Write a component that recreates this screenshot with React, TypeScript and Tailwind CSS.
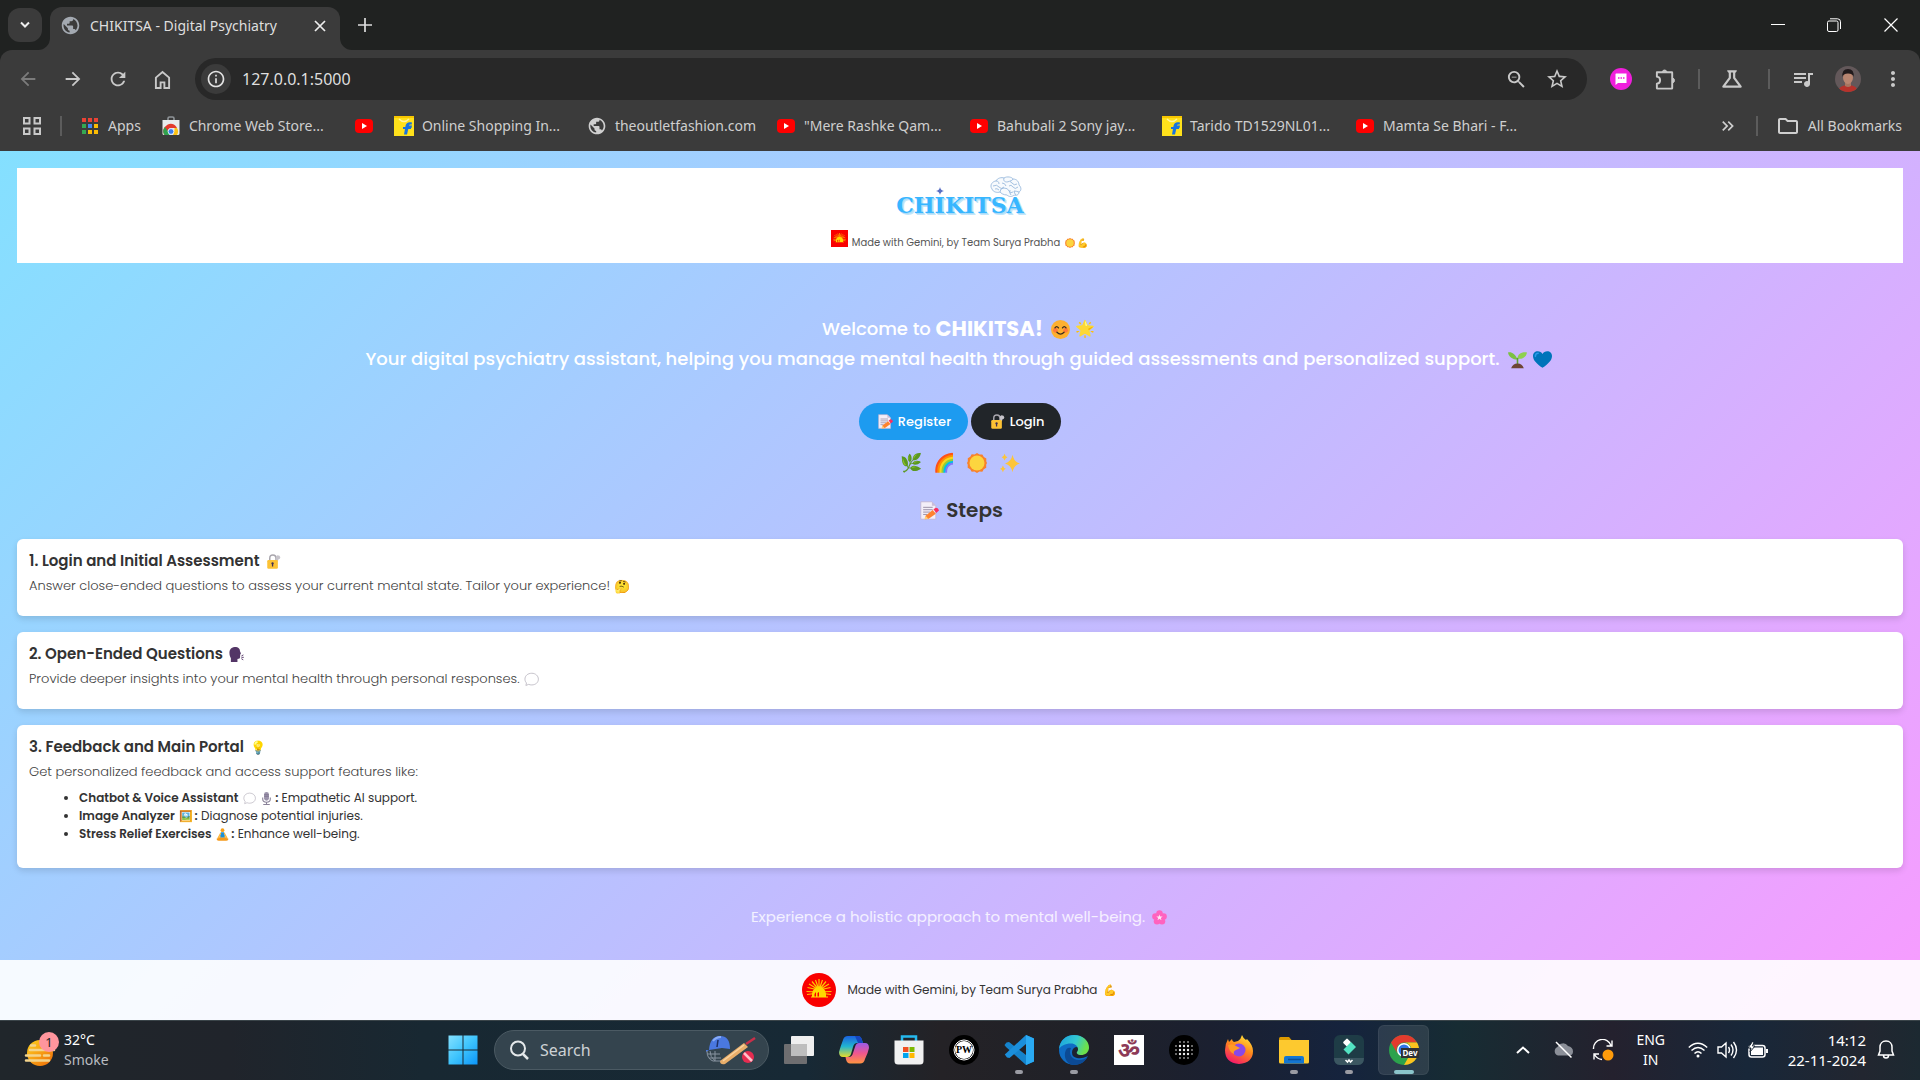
import type { ReactNode } from "react";
import {
  MdArrowBack,
  MdArrowForward,
  MdRefresh,
  MdInfoOutline,
  MdZoomOut,
  MdStarOutline,
  MdOutlineScience,
  MdQueueMusic,
  MdMoreVert,
  MdPublic,
  MdOutlineFolder,
  MdKeyboardDoubleArrowRight,
} from "react-icons/md";

/* ---------- emoji ---------- */

const drawn: Record<string, ReactNode> = {
  "😊": (
    <>
      <circle cx="12" cy="12" r="12" fill="#fdb02f" />
      <circle cx="5.5" cy="13" r="3" fill="#ff7a3c" />
      <circle cx="18.5" cy="13" r="3" fill="#ff7a3c" />
      <path d="M5 10q2-3.500 4.500 0M14.500 10q2.200-3.500 4.500 0M7.500 15.500q4.500 4.500 9 0" fill="none" stroke="#3a2a20" strokeWidth="1.6" strokeLinecap="round" />
    </>
  ),
  "🌱": (
    <>
      <path d="M12 12C9 4 4 2 0 3c1 6 6 9 12 9z" fill="#7bc143" />
      <path d="M12 11c0-6 5-9 12-8-1 6-6 9-12 8z" fill="#8fd14f" />
      <path d="M12 10v9" stroke="#5c9e31" strokeWidth="2" />
      <path d="M4 23q2-6 8-6t8 6z" fill="#6d4534" />
    </>
  ),
  "📝": (
    <>
      <path d="M1 1h14l5 5v17H1z" fill="#f3eef8" stroke="#bfb2cf" strokeWidth="1" />
      <path d="M15 1l5 5h-5z" fill="#c9bcd8" />
      <path d="M4 8h12M4 11h12M4 14h9M4 17h5" stroke="#998ea4" strokeWidth="1.2" />
      <path d="M7 18.500l9-7 4 4.500-9 6.500-4.500.5z" fill="#ff822d" />
      <path d="M17 10.500l3-2q3 0 4 3.500l-3.500 3z" fill="#f92f60" />
      <path d="M7 18.500L5.500 23l5-.5z" fill="#ffce7c" />
    </>
  ),
  "🔐": (
    <>
      <path d="M6 11V7q0-5.500 5-5.500t5 5.500v4" fill="none" stroke="#a9a6ad" strokeWidth="2.4" />
      <path d="M16 7q-1-4 2.500-5 4 0 4.500 3.500-1 3-3 3l-1 3-2.500-1z" fill="#c7c4cb" />
      <rect x="2" y="9.500" width="17" height="14" rx="2" fill="#fcc234" />
      <path d="M10.500 13a2 2 0 011 3.700V20h-2v-3.300a2 2 0 011-3.700z" fill="#3f2f55" />
    </>
  ),
  "☀️": (
    <>
      <path d="M12 0l3 1.700 3.400.1 1.800 3 3 1.700-.1 3.500L24 12l-1 2.200.1 3.500-3 1.700-1.700 3-3.500-.1-2.900 1.700-3-1.700-3.400.1-1.800-3-3-1.700.1-3.500L0 12l1-2.200L.9 6.300l3-1.700 1.700-3 3.500.1z" fill="#f8822b" />
      <circle cx="12" cy="12" r="9" fill="#fcd53f" />
    </>
  ),
  "💙": (
    <>
      <path d="M12 22.500C5 17.500 0 13 0 7.500 0 4 2.600 1.500 6 1.500c2.600 0 4.800 1.300 6 3.500 1.200-2.200 3.400-3.500 6-3.500 3.400 0 6 2.500 6 6 0 5.500-5 10-12 15z" fill="#0074ba" />
      <path d="M3 8c0-2.500 1.500-4 3.500-4" stroke="#2b9bea" strokeWidth="2" fill="none" strokeLinecap="round" />
    </>
  ),
  "🗣️": (
    <>
      <path d="M3 24V18C-.5 12-1 1 9 0c6-.6 8.500 3 8.500 6 0 1.500 1.500 3 1.500 4.500 0 1-1.200 1-1.200 2 0 5.500.2 6.500-4.300 6.500V24z" fill="#533566" />
      <path d="M20.500 14l2-1M20.500 16.500h2.500M20.300 19l2 1.200" stroke="#533566" strokeWidth="1.5" strokeLinecap="round" />
    </>
  ),
  "🗨️": <path d="M12.500 2C6 2 1.500 6 1.500 11.500c0 2.500 1 4.500 2.500 6L3 21.500l4.500-1.700c1.500.6 3.200.9 5 .9 6 0 10.500-4 10.500-9.200S18.500 2 12.500 2z" fill="#fff" stroke="#b9b5bf" strokeWidth="1.3" />,
  "🎙️": (
    <>
      <rect x="7.5" y="0" width="9" height="16" rx="4.5" fill="#9b93ab" />
      <path d="M7.500 5h9M7.500 8h9" stroke="#6d6580" />
      <path d="M5 10v3c0 8 14 8 14 0v-3M12 19v3M6 23h12" stroke="#8a8299" strokeWidth="2" fill="none" />
    </>
  ),
  "🧘": (
    <>
      <circle cx="12" cy="4" r="3.5" fill="#f9a11b" />
      <path d="M9 8h6l2 10H7z" fill="#1b8fd6" />
      <path d="M9 9l-5 9 5-2M15 9l5 9-5-2" stroke="#fdb53a" strokeWidth="2" fill="none" />
      <path d="M1 20q11-5 22 0 0 4-5 3.500H6Q1 24 1 20z" fill="#f59a1c" />
    </>
  ),
  "🌸": (
    <>
      <g fill="#ff63bf">
        <circle cx="12" cy="5.5" r="5.2" />
        <circle cx="18.5" cy="10.2" r="5.2" />
        <circle cx="16" cy="18" r="5.2" />
        <circle cx="8" cy="18" r="5.2" />
        <circle cx="5.5" cy="10.2" r="5.2" />
        <circle cx="12" cy="12" r="6" />
      </g>
      <path d="M12 7l1.200 3.500H17l-3 2.200 1.200 3.600-3.200-2.200-3.200 2.200L10 12.700l-3-2.200h3.800z" fill="#ffe9f6" />
    </>
  ),
  "✨": (
    <g fill="#fcc53a">
      <path d="M15 2q1.500 8.500 9 10.500-7.500 2-9 10.500-1.500-8.500-9-10.500Q13.500 10.500 15 2z" />
      <path d="M5.500 1q.6 3 3.500 4-2.900 1-3.500 4-.6-3-3.500-4 2.900-1 3.500-4zM3.500 15q.6 3 3.500 4-2.900 1-3.500 4-.6-3-3.500-4 2.900-1 3.500-4z" />
    </g>
  ),
};

const sizes = {
  xs: { box: "w-[13px]", art: "size-[10px]", text: "text-[9px]" },
  sm: { box: "w-[17px]", art: "size-[13px]", text: "text-[11px]" },
  md: { box: "w-5", art: "size-[15px]", text: "text-[13px]" },
  lg: { box: "w-[25px]", art: "size-[19px]", text: "text-[16px]" },
  xl: { box: "w-[33px]", art: "size-5", text: "text-[18px]" },
};

function Emoji({ e, s }: { e: string; s: keyof typeof sizes }) {
  const z = sizes[s];
  return (
    <span className={`inline-flex h-[1em] shrink-0 items-center justify-center align-middle leading-none ${z.box}`}>
      {drawn[e] ? (
        <svg role="img" aria-label={e} viewBox="0 0 24 24" className={`shrink-0 ${z.art}`}>{drawn[e]}</svg>
      ) : (
        <span className={z.text}>{e}</span>
      )}
    </span>
  );
}

function SunLogo({ className }: { className: string }) {
  return (
    <svg viewBox="0 0 34 34" className={`shrink-0 ${className}`} role="img" aria-label="Surya Prabha">
      <rect width="34" height="34" fill="#f90000" />
      <g stroke="#ffc400" strokeWidth="1.2">
        <path d="M17 17V6M17 17l-3.500-10M17 17l3.500-10M17 17l-7-8.500M17 17l7-8.500M17 17L7 11M17 17l10-6M17 17L5.500 14.500M17 17l11.500-2.500M17 19L4.500 18.500M17 19l12.500-.5M17 20L5 21.500M17 20l12 1.500" />
      </g>
      <path d="M10 24v-3a7 7 0 0114 0v3z" fill="#ffd800" />
      <path d="M12.500 24v-3l1.500-2v5zM15.500 24v-4l1.500-1v5z" fill="#f90000" />
      <path d="M9 24h17" stroke="#ffe000" strokeWidth="1" />
    </svg>
  );
}

/* ---------- browser ---------- */

function YouTube() {
  return (
    <svg viewBox="0 0 20 20" className="size-5 shrink-0">
      <rect x="1" y="3" width="18" height="14" rx="4" fill="#f00" />
      <path d="M8 7l5 3-5 3z" fill="#fff" />
    </svg>
  );
}
function Flipkart() {
  return (
    <svg viewBox="0 0 20 20" className="size-5 shrink-0">
      <rect width="20" height="20" fill="#ffe11b" />
      <path d="M0 0h20v2H0z" fill="#f7c600" />
      <path d="M5 3q5 5 10 0" stroke="#fff3a0" strokeWidth="1.5" fill="none" />
      <path d="M18 6.500c-4-.8-6 .5-6.500 3.500l-1.500 8.500h3L14.500 12h3l.5-2.500h-3c.2-1 1-1.200 2.700-1z" fill="#1873e0" />
      <path d="M9 12h8" stroke="#1873e0" strokeWidth="2" />
    </svg>
  );
}
function WebStore() {
  return (
    <svg viewBox="0 0 20 20" className="size-5 shrink-0">
      <path d="M7 4V2.500Q7 1 8.500 1h3Q13 1 13 2.500V4" stroke="#8f9498" strokeWidth="1.6" fill="none" />
      <path d="M1.500 4h17v13.500a1.500 1.500 0 01-1.500 1.500H3a1.500 1.500 0 01-1.500-1.500z" fill="#e9ebed" />
      <path d="M3.500 19a6.500 6.500 0 012-9.500 6.500 6.500 0 0110.500 2.500h-6a3.500 3.500 0 00-3 2z" fill="#e33b2e" />
      <path d="M4 11l3.500 5 1 3H3.500A6.500 6.500 0 014 11z" fill="#2fa14f" />
      <path d="M16 12a6.500 6.500 0 010 7h-4l1.500-5V12z" fill="#fbc116" />
      <circle cx="10" cy="15.5" r="2.9" fill="#3b7ded" stroke="#fff" strokeWidth=".8" />
    </svg>
  );
}
function AppsGrid() {
  const c = ["#ea4335", "#ea4335", "#ea4335", "#34a853", "#4285f4", "#fbbc04", "#34a853", "#fbbc04", "#fbbc04"];
  return (
    <svg viewBox="0 0 20 20" className="size-5 shrink-0">
      {c.map((f, i) => (
        <rect key={i} x={2 + (i % 3) * 6} y={2 + Math.floor(i / 3) * 6} width="4" height="4" fill={f} />
      ))}
    </svg>
  );
}

function Bookmark({ icon, label, natural }: { icon: ReactNode; label?: string; natural?: boolean }) {
  return (
    <a href="#" aria-label={label ?? "YouTube"} className="flex shrink-0 items-center gap-2">
      {icon}
      {label && <span className={natural ? "whitespace-nowrap" : "w-[145px] whitespace-nowrap"}>{label}</span>}
    </a>
  );
}

function IconButton({ label, className = "w-[45px]", children }: { label: string; className?: string; children: ReactNode }) {
  return (
    <button type="button" aria-label={label} className={`flex h-10 shrink-0 items-center justify-center ${className}`}>
      {children}
    </button>
  );
}

function Browser() {
  return (
    <header className="bg-[#202221] font-['Noto_Sans','Open_Sans',sans-serif] text-[#dfdfdf]">
      <div className="flex h-[50px] items-end">
        <button type="button" aria-label="Search tabs" className="mb-2 ml-2 flex size-[34px] items-center justify-center rounded-xl bg-[#3b3b3b]">
          <svg viewBox="0 0 10 8" className="h-2 w-[10px]" fill="none" stroke="#eee" strokeWidth="2"><path d="M1 1.500l4 4 4-4" /></svg>
        </button>
        <div className="relative ml-2 flex h-[43px] w-[290px] items-center rounded-t-xl bg-[#3b3b3b] pb-1.5 pl-2.5 pr-3">
          <svg viewBox="0 0 12 12" className="absolute -left-3 bottom-0 size-3"><path d="M12 0v12H0A12 12 0 0012 0z" fill="#3b3b3b" /></svg>
          <svg viewBox="0 0 12 12" className="absolute -right-3 bottom-0 size-3"><path d="M0 0v12h12A12 12 0 010 0z" fill="#3b3b3b" /></svg>
          <MdPublic className="size-[21px] text-[#a3a9b1]" />
          <span className="ml-[9px] flex-1 whitespace-nowrap text-sm">CHIKITSA - Digital Psychiatry</span>
          <button type="button" aria-label="Close tab" className="flex size-4 items-center justify-center">
            <svg viewBox="0 0 12 12" className="size-3" stroke="#eee" strokeWidth="1.7"><path d="M1 1l10 10M11 1L1 11" /></svg>
          </button>
        </div>
        <button type="button" aria-label="New tab" className="mb-[18px] ml-[18px]">
          <svg viewBox="0 0 14 14" className="size-3.5" stroke="#ddd" strokeWidth="1.7"><path d="M7 0v14M0 7h14" /></svg>
        </button>
        <div className="ml-auto flex items-center self-stretch">
          <IconButton label="Minimize" className="w-14"><svg viewBox="0 0 14 14" className="size-3.5" stroke="#fff"><path d="M0 6.500h14" /></svg></IconButton>
          <IconButton label="Restore" className="w-14">
            <svg viewBox="0 0 14 14" className="size-3.5" fill="none" stroke="#fff"><rect x=".5" y="3" width="10.5" height="10.5" rx="1.5" /><path d="M3 .8h7.500a3 3 0 013 3V11" /></svg>
          </IconButton>
          <IconButton label="Close" className="w-[58px]"><svg viewBox="0 0 14 14" className="size-3.5" stroke="#fff" strokeWidth="1.2"><path d="M.5.5l13 13M13.500.5l-13 13" /></svg></IconButton>
        </div>
      </div>

      <div className="rounded-t-xl bg-[#3b3b3b]">
        <div className="flex h-[50px] items-center pl-[5px] pt-2 text-[#c9c9c9]">
          <IconButton label="Back"><MdArrowBack className="size-[22px] text-[#7b7b7b]" /></IconButton>
          <IconButton label="Forward"><MdArrowForward className="size-[22px]" /></IconButton>
          <IconButton label="Reload"><MdRefresh className="size-[22px]" /></IconButton>
          <IconButton label="Home">
            <svg viewBox="0 0 18 20" className="h-[19px] w-[17px]" fill="none" stroke="currentColor" strokeWidth="2"><path d="M2 8l7-6 7 6v11h-5v-6H7v6H2z" /></svg>
          </IconButton>
          <div className="ml-2.5 flex h-[42px] flex-1 items-center rounded-full bg-[#282828] pl-1.5 pr-[18px]">
            <span className="flex size-[30px] items-center justify-center rounded-full bg-[#3b3b3b]"><MdInfoOutline className="size-5 text-[#e3e3e3]" /></span>
            <input aria-label="Address" defaultValue="127.0.0.1:5000" className="ml-[11px] min-w-0 flex-1 bg-transparent text-base text-[#dfdfdf] outline-none" />
            <button type="button" aria-label="Zoom out"><MdZoomOut className="size-[23px]" /></button>
            <button type="button" aria-label="Bookmark this tab" className="ml-[17px]"><MdStarOutline className="size-6" /></button>
          </div>
          <div className="flex w-[333px] shrink-0 items-center pl-[11px]">
            <IconButton label="Chat extension">
              <svg viewBox="0 0 22 22" className="size-[22px]"><circle cx="11" cy="11" r="11" fill="#f01edc" /><path d="M6 5.500h10.500V15H8l-2.500 2V6z" fill="#fff" /><path d="M8 10h1.500M10.500 10H12M13 10h1.500" stroke="#f01edc" strokeWidth="1.5" /></svg>
            </IconButton>
            <IconButton label="Extensions">
              <svg viewBox="0 0 24 24" className="size-[23px]" fill="none" stroke="currentColor" strokeWidth="2"><path d="M3 4.500h15.500q.5 0 .5.500v16q0 .5-.5.500H3.500q-.5 0-.5-.5v-4.500c4.500-.5 4.500-7 0-7.500V5z" strokeLinejoin="round" /><path d="M8.500 4a2.600 2.600 0 015 0zM19.500 10.500a2.600 2.600 0 010 5z" fill="currentColor" strokeWidth="1" /></svg>
            </IconButton>
            <span className="ml-[10px] h-5 w-0.5 bg-[#5c5c5c]" />
            <IconButton label="Labs" className="w-16"><MdOutlineScience className="size-[26px]" /></IconButton>
            <span className="ml-1 h-5 w-0.5 bg-[#5c5c5c]" />
            <IconButton label="Media" className="ml-2.5 w-[45px]"><MdQueueMusic className="size-6" /></IconButton>
            <IconButton label="Profile">
              <svg viewBox="0 0 26 26" className="size-[26px] rounded-full"><rect width="26" height="26" fill="#63585a" /><path d="M3 26q1-7 10-7t10 7z" fill="#b7322b" /><path d="M10 15h6v5q-3 2-6 0z" fill="#a87560" /><ellipse cx="13" cy="11.5" rx="5" ry="6.5" fill="#b98570" /><path d="M7.500 11Q6.500 3 13 3t5.500 8Q18 7.500 13 7.500T7.500 11z" fill="#221a1c" /></svg>
            </IconButton>
            <IconButton label="Menu"><MdMoreVert className="size-6" /></IconButton>
          </div>
        </div>

        <nav aria-label="Bookmarks" className="flex h-[51px] items-center gap-5 whitespace-nowrap pl-[22px] pr-[18px] text-sm text-[#cfcfcf]">
          <svg viewBox="0 0 20 20" className="size-5 shrink-0" fill="none" stroke="#c9c9c9" strokeWidth="2"><path d="M2 2h5.500v5.500H2zM12.500 2H18v5.500h-5.500zM2 12.500h5.500V18H2zM12.500 12.500H18V18h-5.500z" /></svg>
          <span className="-mx-0.5 h-5 w-0.5 bg-[#5c5c5c]" />
          <Bookmark icon={<AppsGrid />} label="Apps" natural />
          <Bookmark icon={<WebStore />} label="Chrome Web Store..." />
          <Bookmark icon={<YouTube />} />
          <Bookmark icon={<Flipkart />} label="Online Shopping In..." />
          <Bookmark icon={<MdPublic className="size-5 shrink-0" />} label="theoutletfashion.com" natural />
          <Bookmark icon={<YouTube />} label={'"Mere Rashke Qam...'} />
          <Bookmark icon={<YouTube />} label="Bahubali 2 Sony jay..." />
          <Bookmark icon={<Flipkart />} label="Tarido TD1529NL01..." />
          <Bookmark icon={<YouTube />} label="Mamta Se Bhari - F..." />
          <span className="ml-auto flex items-center gap-[18px]">
            <button type="button" aria-label="More bookmarks"><MdKeyboardDoubleArrowRight className="size-5" /></button>
            <span className="h-5 w-0.5 bg-[#5c5c5c]" />
            <a href="#" className="flex items-center gap-2"><MdOutlineFolder className="size-6" />All Bookmarks</a>
          </span>
        </nav>
      </div>
    </header>
  );
}

/* ---------- page ---------- */

function Brain() {
  return (
    <svg viewBox="0 0 32 22" className="absolute -top-[17px] right-0.5 h-[22px] w-8" fill="#f7fafd" stroke="#8fb3d9" strokeWidth=".8">
      <path d="M2 13C-1 9 3 5 6 5c1-3 6-4 8-3 3-2 8-1 9 1 4 0 6 3 6 6 3 3 2 6 0 7 0 3-3 4-5 3-2 2-5 2-7 0-4 0-6-2-7-3-3 1-7 0-8-3z" />
      <path d="M6 5c2 0 3 1 3 3M3 10q4-2 6 1t5 0M14 2c-1 3 1 4 3 4M12 7q3 0 4 3M17 6q3-2 5 1t5 1M19 10q2-2 4 1t5 0M10 16q0-4 4-4t5 3 4 1M23 3q-1 2-3 2M29 16q-3-1-5-1M20 14q-1 3 1 5M24 15q0 2 2 4M5 13q2-1 4 1" fill="none" />
    </svg>
  );
}

function Card({ title, emoji, children }: { title: string; emoji: string; children: ReactNode }) {
  return (
    <section className="rounded-md bg-white px-3 pt-[11px] shadow-[0_3px_6px_rgba(0,0,0,0.12)]">
      <h3 className="flex items-center gap-1 text-[15px] font-semibold leading-[22px] text-[#333]">{title} <Emoji e={emoji} s="md" /></h3>
      {children}
    </section>
  );
}

const desc = "mt-1 flex items-center gap-0.5 text-[13px] font-light leading-5 text-[#444]";

function Page() {
  return (
    <div className="flex flex-1 flex-col bg-[linear-gradient(135deg,#84e0ff_0%,#bcbfff_50%,#f89bff_100%)] font-['Poppins','Inter',sans-serif]">
      <div className="px-[17px] pt-[17px]">
        <div className="flex h-[95px] flex-col items-center bg-white pt-[25px]">
          <div className="relative">
            <Brain />
            <h1 className="relative font-['DejaVu_Serif',serif] text-[22px] font-bold leading-6 text-[#38b6ff] [text-shadow:1px_1px_0_#a9dcfa,2px_2px_0_#c4e6fa]">CHIKITSA</h1>
            <svg viewBox="0 0 8 8" className="absolute -top-1.5 left-10 size-2"><path d="M4 0q.6 3.400 4 4-3.400.6-4 4-.6-3.400-4-4 3.400-.6 4-4z" fill="#5a6fc4" /></svg>
          </div>
          <p className="mt-[13px] flex items-start text-[10px] leading-[14px] text-[#555]">
            <SunLogo className="mr-1 size-[17px]" />
            <span className="mt-1.5 flex items-center">Made with Gemini, by Team Surya Prabha<span className="w-[3px]" /><Emoji e="☀️" s="xs" /><Emoji e="💪" s="xs" /></span>
          </p>
        </div>

        <div className="mt-[51px] text-center text-lg font-medium leading-[30px] text-white">
          <p className="flex items-center justify-center">Welcome to&nbsp;<strong className="text-[21px] font-bold">CHIKITSA!</strong><span className="w-[5px]" /><Emoji e="😊" s="lg" /><Emoji e="🌟" s="lg" /></p>
          <p className="flex items-center justify-center">
            Your digital psychiatry assistant, helping you manage mental health through guided assessments and personalized support.
            <span className="w-[5px]" /><Emoji e="🌱" s="lg" /><Emoji e="💙" s="lg" />
          </p>
        </div>

        <div className="mt-[29px] flex justify-center gap-[3px] text-[13px] font-medium text-white">
          <button type="button" className="flex h-[37px] w-[109px] items-center justify-center gap-0.5 rounded-full bg-[#1d9bf0]"><Emoji e="📝" s="md" />Register</button>
          <button type="button" className="flex h-[37px] w-[90px] items-center justify-center gap-0.5 rounded-full bg-[#212529]"><Emoji e="🔐" s="md" />Login</button>
        </div>

        <div className="mt-2 flex h-[30px] items-center justify-center">
          <Emoji e="🌿" s="xl" /><Emoji e="🌈" s="xl" /><Emoji e="☀️" s="xl" /><Emoji e="✨" s="xl" />
        </div>

        <h2 className="mt-[17px] flex items-center justify-center gap-1 text-xl font-semibold leading-[30px] text-[#333]"><Emoji e="📝" s="lg" />Steps</h2>

        <div className="mt-3.5 flex flex-col gap-4">
          <Card title="1. Login and Initial Assessment" emoji="🔐">
            <p className={`${desc} pb-5`}>Answer close-ended questions to assess your current mental state. Tailor your experience! <Emoji e="🤔" s="md" /></p>
          </Card>
          <Card title="2. Open-Ended Questions" emoji="🗣️">
            <p className={`${desc} pb-5`}>Provide deeper insights into your mental health through personal responses. <Emoji e="🗨️" s="md" /></p>
          </Card>
          <Card title="3. Feedback and Main Portal" emoji="💡">
            <p className={desc}>Get personalized feedback and access support features like:</p>
            <ul className="mt-[7px] list-disc pb-[25px] pl-[50px] text-xs leading-[18px] text-[#333]">
              <li><b className="font-semibold">Chatbot &amp; Voice Assistant <Emoji e="🗨️" s="sm" /><Emoji e="🎙️" s="sm" />:</b> Empathetic AI support.</li>
              <li><b className="font-semibold">Image Analyzer <Emoji e="🖼️" s="sm" />:</b> Diagnose potential injuries.</li>
              <li><b className="font-semibold">Stress Relief Exercises <Emoji e="🧘" s="sm" />:</b> Enhance well-being.</li>
            </ul>
          </Card>
        </div>

        <p className="mb-[30px] mt-[37px] flex items-center justify-center gap-1 text-[15px] leading-6 text-white/80">Experience a holistic approach to mental well-being. <Emoji e="🌸" s="md" /></p>
      </div>

      <footer className="mt-auto flex h-[60px] items-center justify-center bg-white/90 text-xs text-[#333]">
        <SunLogo className="mr-3 size-[34px] rounded-full" />
        Made with Gemini, by Team Surya Prabha<span className="w-1" /><Emoji e="💪" s="sm" />
      </footer>
    </div>
  );
}

/* ---------- taskbar ---------- */

function Task({ label, active, running, children }: { label: string; active?: boolean; running?: boolean; children: ReactNode }) {
  return (
    <button type="button" aria-label={label} className={`relative flex h-[50px] items-center justify-center rounded-md ${active ? "mx-[2px] w-[51px] bg-white/10 ring-1 ring-inset ring-white/5" : "w-[55px]"}`}>
      <svg viewBox="0 0 30 30" className="size-[30px]">{children}</svg>
      {running && <span className="absolute bottom-px h-1 w-2 rounded-full bg-[#9a9ba3]" />}
      {active && <span className="absolute bottom-px h-1 w-5 rounded-full bg-[#8bc5cb]" />}
    </button>
  );
}

function Taskbar() {
  return (
    <footer className="flex h-[60px] shrink-0 items-center border-t border-[#3a4449] bg-[linear-gradient(90deg,#20262b_0%,#20242b_12%,#182832_22%,#172935_42%,#242226_49%,#202128_56%,#1b2030_63%,#15233d_70%,#172c33_76%,#24212e_84%,#182739_91%,#222630_97%,#1c2931_100%)] pb-px font-['Noto_Sans','Open_Sans',sans-serif] text-white">
      <div className="flex w-[435px] shrink-0 items-center pl-6">
        <svg viewBox="0 0 36 36" className="size-9" role="img" aria-label="Smoke">
          <defs><linearGradient id="sun" x2="1" y2="1"><stop stopColor="#ffd21f" /><stop offset="1" stopColor="#ee6a08" /></linearGradient></defs>
          <circle cx="16" cy="21" r="13" fill="url(#sun)" />
          <path d="M7 13.500h4M6 18h24M2 23.500h14M20 23.500h5M2 28.500h23" stroke="#f3d48c" strokeWidth="2.5" strokeLinecap="round" />
          <circle cx="25" cy="10" r="10" fill="#ff959d" />
          <text x="25" y="15" textAnchor="middle" fontSize="13" fill="#222">1</text>
        </svg>
        <div className="ml-1 text-sm leading-5">
          <div>32°C</div>
          <div className="text-[#b9bcc0]">Smoke</div>
        </div>
      </div>

      <Task label="Start">
        <defs><linearGradient id="win" gradientUnits="userSpaceOnUse" x1="0" y1="0" x2="30" y2="30"><stop stopColor="#87e2ff" /><stop offset=".5" stopColor="#3ec4fd" /><stop offset="1" stopColor="#0a93f8" /></linearGradient></defs>
        <path d="M.5.5h14v14h-14zM15.500.5h14v14h-14zM.5 15.500h14v14h-14zM15.500 15.500h14v14h-14z" fill="url(#win)" />
      </Task>
      <div className="ml-1 mr-0.5 flex h-10 w-[275px] items-center rounded-full border border-[#4b5a63] bg-[#34444e] pl-3.5 pr-3">
        <svg viewBox="0 0 20 20" className="size-5" fill="none" stroke="#e4e8ea" strokeWidth="2"><circle cx="9" cy="8.5" r="7" /><path d="M14 14l5 5" strokeWidth="2.5" /></svg>
        <input aria-label="Search" placeholder="Search" className="ml-[11px] min-w-0 flex-1 bg-transparent text-base outline-none placeholder:text-[#cdd2d5]" />
        <svg viewBox="0 0 50 30" className="h-[30px] w-[50px] shrink-0">
          <path d="M3 15Q4 1 14 1t10 13l-8-1-13 2-3 2v-2z" fill="#4a78e0" />
          <path d="M7 6q3-4 8-4" stroke="#89acf5" strokeWidth="2" fill="none" />
          <path d="M12 5l-1 7" stroke="#1c2f66" strokeWidth="1.5" />
          <path d="M1 16q0 8 6 10h8M4 16q0 6 5 10M1 19h13M3 23h12M9 16v10" stroke="#8793a0" fill="none" />
          <path d="M14 26L38 8l4 4-23 17q-5 1-5-3z" fill="#e9ae6a" />
          <path d="M17 26L38 10" stroke="#f8d3a0" strokeWidth="1.5" />
          <path d="M40 9l9-6" stroke="#c92f49" strokeWidth="2.5" />
          <circle cx="42" cy="22" r="6" fill="#e62c50" /><path d="M38 18l8 8" stroke="#ffc1cb" strokeWidth="2.5" />
        </svg>
      </div>

      <Task label="Task view">
        <rect x="7" y="1" width="23" height="20" rx="1" fill="#efefef" /><rect y="9" width="23" height="20" rx="1" fill="#6e6e70" /><rect x="7" y="9" width="16" height="12" fill="#bebebe" />
      </Task>
      <Task label="Copilot">
        <defs>
          <linearGradient id="cpA" x2="0" y2="1"><stop stopColor="#1a62e0" /><stop offset=".5" stopColor="#22b5d0" /><stop offset="1" stopColor="#e6dc2b" /></linearGradient>
          <linearGradient id="cpB" x2="0" y2="1"><stop stopColor="#9a5be8" /><stop offset=".5" stopColor="#f0568f" /><stop offset="1" stopColor="#ff9440" /></linearGradient>
        </defs>
        <path d="M9 1h10q3 0 4 4l1 3h-6q-3 0-4 4l-2 7q-1 3-4 3H4Q0 22 0 17 2 10 4 5q1-4 5-4z" fill="url(#cpA)" />
        <path d="M21 28.500H11q-3 0-4-4L6.500 22H10q3 0 4-4l2-6q1-4 4-4h6q4 0 4 5-1 5-4 11-1 4.500-5 4.500z" fill="url(#cpB)" />
        <path d="M19 1q3 0 4 4l1 3h-5l-3-7z" fill="#1546c0" />
      </Task>
      <Task label="Microsoft Store">
        <path d="M8 8V1.500h14V8" fill="none" stroke="#25b9ee" strokeWidth="2.5" /><path d="M.5 5.500h29V26q0 3.500-3.500 3.500H4Q.5 29.500.5 26z" fill="#f1f1f1" />
        <path d="M9 12h5.500v5H9z" fill="#f05022" /><path d="M15.500 12h5v5h-5z" fill="#7db900" /><path d="M9 18h5.500v5H9z" fill="#00a3ee" /><path d="M15.500 18h5v5h-5z" fill="#ffb800" />
      </Task>
      <Task label="PW">
        <circle cx="15" cy="15" r="15" fill="#000" /><circle cx="15" cy="15" r="9" fill="#fff" /><circle cx="15" cy="15" r="10" fill="none" stroke="#fff" />
        <text x="15" y="18" textAnchor="middle" fontSize="10" fontFamily="Liberation Serif" fontWeight="700" fill="#000">PW</text>
      </Task>
      <Task label="Visual Studio Code" running>
        <path d="M22 0l8 3.500v23L22 30 2 12 .5 10l2-2.500L5 7l17 13z" fill="#1583cc" /><path d="M22 0L.8 19.500 3 22.500l2.500.5L22 9z" fill="#1b8fdb" /><path d="M22 0l8 3.500v23L22 30z" fill="#2aaaf3" />
      </Task>
      <Task label="Edge" running>
        <defs><linearGradient id="edA" x2="1" y2=".3"><stop stopColor="#1a9fe0" /><stop offset=".6" stopColor="#33c8d0" /><stop offset="1" stopColor="#6de04a" /></linearGradient></defs>
        <circle cx="15" cy="15" r="15" fill="#0f6cc4" />
        <path d="M12 13c-3 6 1 12 8 12 4 0 6-1 8.500-3C26 27 21 30 15 30 9 30 5 24 6 18q1-6 6-5z" fill="#0c4a94" />
        <path d="M17 12q-4 1-4 5.500T18 23q5 1 10-1.500l2.500-1.500V14z" fill="#1d2230" />
        <path d="M0 14C1 5 7 0 15 0c9 0 15 6 15 12.500 0 5-4 7.500-8 7.500-3 0-5-1.500-4-3s1-2 1-3c0-3-3-5.500-7-5.500C6 8.500 1.500 11 0 14z" fill="url(#edA)" />
      </Task>
      <Task label="Om">
        <rect width="30" height="30" fill="#fff" /><text x="15" y="23" textAnchor="middle" fontSize="22" fontWeight="700" fill="#8d3a57">ॐ</text>
      </Task>
      <Task label="Dots">
        <circle cx="15" cy="15" r="15" fill="#000" />
        {[7, 11, 15, 19, 23].map((x) => [7, 11, 15, 19, 23].map((y) => Math.hypot(x - 15, y - 15) < 10 && <circle key={`${x}-${y}`} cx={x} cy={y} r={Math.hypot(x - 15, y - 15) < 6 ? 1.2 : 0.8} fill="#eee" />))}
      </Task>
      <Task label="Firefox">
        <defs><linearGradient id="ff" x1=".8" y1="0" x2=".3" y2="1"><stop stopColor="#ffe83b" /><stop offset=".45" stopColor="#ff8a1c" /><stop offset="1" stopColor="#f5156c" /></linearGradient></defs>
        <path d="M18 0q1 3 4 5l1-1q6 6 6 12 0 12-14 13Q1 28 1 15 1 9 4 4l1 3 3-3q0 2 2 3l4-1q3-2 4-6z" fill="url(#ff)" />
        <circle cx="15" cy="15" r="6.5" fill="#8a48e8" /><path d="M4 10q5-2 8 1l4 2-4 2q-3 1-2 4-5-2-6-9z" fill="#ff9a24" />
      </Task>
      <Task label="File Explorer" running>
        <path d="M0 3.500q0-1.500 1.500-1.500H10l3 3.500H0z" fill="#dc9a00" /><path d="M0 10V5h30v22q0 1.500-1.500 1.500h-27Q0 28.500 0 27z" fill="#fdc92f" /><path d="M5 28.500V23q0-2 2-2h16q2 0 2 2v5.500z" fill="#1476d1" /><path d="M9 24.500h13" stroke="#0b4f97" strokeWidth="1.5" />
      </Task>
      <Task label="Filmora" running>
        <rect width="30" height="30" rx="6" fill="#1e3c46" /><path d="M0 23h30q0 7-6 7H6q-6 0-6-7z" fill="#3b5661" /><rect x="-3" y="-3" width="6" height="6" rx="1" transform="translate(13 7.5) rotate(45)" fill="#fff" /><path d="M17 7l5 5-7.500 7.500-5-5z" fill="#53e3c2" /><path d="M11.500 25l2 2 1.500-2 1.500 2 2-2" stroke="#fff" strokeWidth="1.5" fill="none" />
      </Task>
      <Task label="Chrome Dev" active>
        <circle cx="15" cy="15" r="15" fill="#2ca24c" />
        <path d="M2 7.500A15 15 0 0128 7.500H15a7.500 7.500 0 00-6.500 11.200z" fill="#e33b2e" />
        <path d="M28 7.500A15 15 0 0115 30l6.500-11.300A7.500 7.500 0 0015 7.500z" fill="#fcc31e" />
        <circle cx="15" cy="15" r="7" fill="#fff" /><circle cx="15" cy="15" r="5.5" fill="#2f74e8" />
        <rect x="12" y="13" width="18" height="10" fill="#303134" /><text x="21" y="21" textAnchor="middle" fontSize="8" fontWeight="700" fill="#fff">Dev</text>
      </Task>

      <div className="ml-auto flex items-center pr-[15px]">
        <IconButton label="Show hidden icons" className="w-10"><svg viewBox="0 0 14 8" className="h-2 w-3.5" fill="none" stroke="#fff" strokeWidth="2"><path d="M1 7l6-5.500L13 7" /></svg></IconButton>
        <IconButton label="OneDrive" className="w-10">
          <svg viewBox="0 0 20 18" className="h-[18px] w-5"><path d="M5 14.500a4.500 4.500 0 01-.5-8.500A6 6 0 0115 5q5 1 5 5.500 0 4-4 4z" fill="#8b8f98" /><path d="M3 1l15.500 15.500" stroke="#fff" strokeWidth="1.5" /></svg>
        </IconButton>
        <IconButton label="Update" className="w-10">
          <svg viewBox="0 0 22 22" className="size-[22px]" fill="none" stroke="#fff" strokeWidth="1.4"><path d="M1.500 10A9 9 0 0119 6.500M20 1.500v5.500h-5.500M10 20.500Q5 20 2.500 15.500M2 20.500V15h5" /><circle cx="16" cy="16" r="5.5" fill="#ff9b0b" stroke="none" /></svg>
        </IconButton>
        <div className="w-14 text-center text-sm leading-5">ENG<br />IN</div>
        <div className="ml-1 flex items-center">
          <IconButton label="Wi-Fi" className="w-[30px]"><svg viewBox="0 0 20 16" className="h-4 w-5" fill="none" stroke="#fff" strokeWidth="1.5"><path d="M.8 5.500q9-8.500 18.400 0M3.500 8.500q6.500-6 13 0M6.500 11.500q3.500-3.500 7 0" /><circle cx="10" cy="14" r="1.5" fill="#fff" stroke="none" /></svg></IconButton>
          <IconButton label="Volume" className="w-[30px]"><svg viewBox="0 0 21 18" className="h-[18px] w-[21px]" fill="none" stroke="#fff" strokeWidth="1.4"><path d="M1 6h3.500L9 2v14l-4.500-4H1zM11.500 6q2 3 0 6M14 3.500q4 5.500 0 11M16.500 1q6 8 0 16" /></svg></IconButton>
          <IconButton label="Battery" className="w-[30px]"><svg viewBox="0 0 20 16" className="h-4 w-5"><rect x="1" y="3.5" width="16" height="11.5" rx="2.5" fill="none" stroke="#fff" strokeWidth="1.5" /><rect x="3" y="5.5" width="12" height="7.5" fill="#fff" /><path d="M18 7h2v4h-2z" fill="#fff" /><path d="M4.500-.5L0 6h3l-1 4 5-6H4.500l1.500-4z" fill="#fff" stroke="#1a2734" strokeWidth="1" /></svg></IconButton>
        </div>
        <div className="ml-[15px] text-right text-[15px] leading-5">14:12<br />22-11-2024</div>
        <IconButton label="Notifications" className="w-[39px]">
          <svg viewBox="0 0 18 20" className="h-5 w-[18px]" fill="none" stroke="#fff" strokeWidth="1.5"><path d="M9 1C5 1 3 4 3 7v4L1.500 15h15L15 11V7c0-3-2-6-6-6zM6.500 15.500q0 2.500 2.500 2.500t2.500-2.500" /></svg>
        </IconButton>
      </div>
    </footer>
  );
}

export default function App() {
  return (
    <div className="flex min-h-screen flex-col">
      <Browser />
      <Page />
      <Taskbar />
    </div>
  );
}
